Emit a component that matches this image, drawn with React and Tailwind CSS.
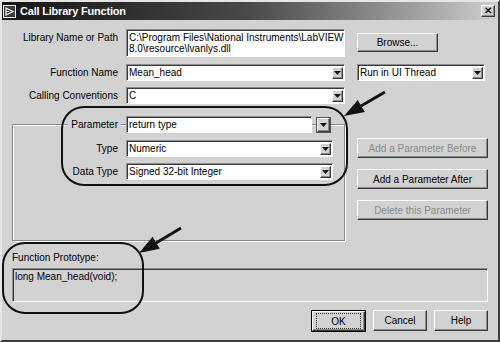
import React from 'react';

const font = "font-['Liberation_Sans',Arial,sans-serif]";

function Raised({ className = '', children }) {
    return (
        <div className={`border border-t-white border-l-white border-r-[#3a3a3a] border-b-[#3a3a3a] shadow-[inset_-1px_-1px_0_#8c8c8c] bg-[#d2d2d2] flex items-center justify-center ${className}`}>
            {children}
        </div>
    );
}

function Sunken({ className = '', children }) {
    return (
        <div className={`border border-t-[#8c8c8c] border-l-[#8c8c8c] border-r-white border-b-white shadow-[inset_1px_1px_0_#3a3a3a] ${className}`}>
            {children}
        </div>
    );
}

function Arrow({ small = false }) {
    return (
        <svg width={small ? 7 : 9} height={small ? 4 : 5} viewBox="0 0 7 4">
            <path d="M0 0 H7 L3.5 4 Z" fill="#111" />
        </svg>
    );
}

function Combo({ value, className = '' }) {
    return (
        <Sunken className={`bg-white h-[17px] flex items-center pl-[2px] pr-[1px] ${className}`}>
            <span className="flex-1 leading-[13px]">{value}</span>
            <Raised className="w-[11px] h-[12px]">
                <Arrow small />
            </Raised>
        </Sunken>
    );
}

function Button({ children, disabled = false, className = '' }) {
    return (
        <Raised className={`${disabled ? 'text-[#8a8a8a]' : 'text-black'} ${className}`}>
            {children}
        </Raised>
    );
}

function Label({ children, className = '' }) {
    return <div className={`w-[106px] text-right leading-[13px] ${className}`}>{children}</div>;
}

export default function App() {
    return (
        <div className={`relative w-[500px] h-[342px] ${font} text-[10px] text-black`}>
            <div className="w-full h-full bg-[#d2d2d2] border-2 border-t-[#e6e6e6] border-l-[#e6e6e6] border-r-[#3c3c3c] border-b-[#3c3c3c] flex flex-col">
                {/* title bar */}
                <div className="h-[18px] flex items-center pl-[1px] pr-[3px] bg-gradient-to-r from-[#151515] via-[#4a4a4a] to-[#cfcfcf]">
                    <svg width="13" height="13" viewBox="0 0 13 13" className="mr-[4px]">
                        <rect x="0.5" y="0.5" width="12" height="12" fill="#3a3a3a" stroke="#f0f0f0" />
                        <path d="M3 3 L10 6.5 L3 10 Z" fill="none" stroke="#f0f0f0" strokeWidth="1.3" />
                        <path d="M3 6.5 H6" stroke="#f0f0f0" />
                    </svg>
                    <span className="flex-1 text-white font-bold text-[11px] tracking-[-0.2px]">Call Library Function</span>
                    <Raised className="w-[14px] h-[12px] font-bold text-[10px] leading-none">✕</Raised>
                </div>

                <div className="flex flex-col pl-[10px] pr-[10px]">
                    {/* library path */}
                    <div className="flex items-start mt-[9px]">
                        <Label className="mt-[2px]">Library Name or Path</Label>
                        <Sunken className="ml-[8px] w-[219px] h-[28px] bg-white pl-[2px] pt-[2px] leading-[11px]">
                            <div>C:\Program Files\National Instruments\LabVIEW</div>
                            <div>8.0\resource\lvanlys.dll</div>
                        </Sunken>
                        <Button className="ml-[12px] mt-[4px] w-[81px] h-[19px]">Browse...</Button>
                    </div>

                    {/* function name */}
                    <div className="flex items-center mt-[7px]">
                        <Label>Function Name</Label>
                        <Combo value="Mean_head" className="ml-[8px] w-[219px]" />
                        <Combo value="Run in UI Thread" className="ml-[12px] w-[128px]" />
                    </div>

                    {/* calling conventions */}
                    <div className="flex items-center mt-[6px]">
                        <Label>Calling Conventions</Label>
                        <Combo value="C" className="ml-[8px] w-[219px]" />
                    </div>

                    {/* parameter group + buttons */}
                    <div className="flex mt-[20px]">
                        <div className="w-[333px] h-[117px] border border-[#8a8a8a] shadow-[inset_1px_1px_0_white,1px_1px_0_white] flex flex-col">
                            <div className="flex items-center -mt-[9px] h-[17px]">
                                <div className="w-[105px] text-right leading-[13px]">
                                    <span className="bg-[#d2d2d2] pl-[3px] pr-[3px] -mr-[3px]">Parameter</span>
                                </div>
                                <Sunken className="ml-[8px] w-[186px] h-[17px] bg-white pl-[2px] flex items-center leading-[13px]">
                                    return type
                                </Sunken>
                                <div className="ml-[4px] w-[15px] h-[16px] border border-[#555] bg-[#d2d2d2] flex">
                                    <Raised className="flex-1">
                                        <Arrow small />
                                    </Raised>
                                </div>
                            </div>
                            <div className="flex items-center mt-[7px]">
                                <div className="w-[105px] text-right leading-[13px]">Type</div>
                                <Combo value="Numeric" className="ml-[8px] w-[207px] h-[16px]" />
                            </div>
                            <div className="flex items-center mt-[6px]">
                                <div className="w-[105px] text-right leading-[13px]">Data Type</div>
                                <Combo value="Signed 32-bit Integer" className="ml-[8px] w-[207px] h-[16px]" />
                            </div>
                        </div>
                        <div className="ml-[12px] flex flex-col gap-[11px] pt-[14px]">
                            <Button disabled className="w-[131px] h-[20px]">Add a Parameter Before</Button>
                            <Button className="w-[131px] h-[20px]">Add a Parameter After</Button>
                            <Button disabled className="w-[131px] h-[20px]">Delete this Parameter</Button>
                        </div>
                    </div>

                    {/* prototype */}
                    <div className="mt-[10px] leading-[13px]">Function Prototype:</div>
                    <Sunken className="mt-[4px] w-[476px] h-[34px] pl-[2px] pt-[1px] leading-[13px]">
                        long Mean_head(void);
                    </Sunken>

                    {/* dialog buttons */}
                    <div className="flex justify-end gap-[7px] mt-[8px]">
                        <div className="w-[55px] h-[22px] border border-black flex">
                            <Raised className="flex-1">
                                <span className="outline outline-1 outline-dotted outline-[#333] w-[43px] h-[14px] flex items-center justify-center">OK</span>
                            </Raised>
                        </div>
                        <Button className="w-[54px] h-[21px]">Cancel</Button>
                        <Button className="w-[54px] h-[21px]">Help</Button>
                    </div>
                </div>
            </div>

            {/* annotations drawn over the dialog */}
            <svg className="absolute inset-0 pointer-events-none" width="500" height="342" viewBox="0 0 500 342">
                <rect x="62" y="107" width="285" height="78" rx="22" fill="none" stroke="#111" strokeWidth="2" />
                <rect x="3" y="243" width="140" height="70" rx="22" fill="none" stroke="#111" strokeWidth="2" />
                <line x1="385" y1="92" x2="361" y2="106" stroke="#111" strokeWidth="3" />
                <polygon points="344,116 364.8,111.9 357.8,99.9" fill="#111" />
                <line x1="181" y1="228" x2="156" y2="243" stroke="#111" strokeWidth="3" />
                <polygon points="139,253 159.8,248.8 152.6,236.8" fill="#111" />
            </svg>
        </div>
    );
}
